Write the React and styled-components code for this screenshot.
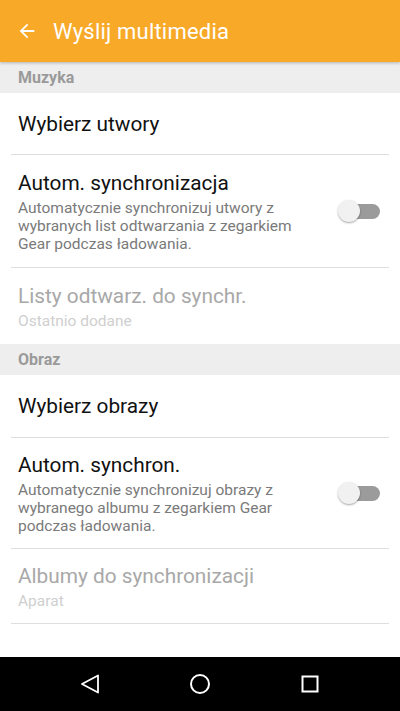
import React from "react";
import styled, { createGlobalStyle } from "styled-components";

const Global = createGlobalStyle`
  html, body { margin: 0; padding: 0; background: #fff; }
  body { font-family: Roboto, "Noto Sans", sans-serif; }
  * { box-sizing: border-box; }
`;

const Screen = styled.div`
  width: 400px;
  height: 711px;
  display: flex;
  flex-direction: column;
  background: #fff;
  overflow: hidden;
`;

const AppBar = styled.header`
  height: 62px;
  flex: none;
  background: #f8a928;
  display: flex;
  align-items: center;
  padding-left: 16px;
  gap: 15px;
  color: #fff;
  position: relative;
  z-index: 1;
  box-shadow: 0 1px 3px rgba(0, 0, 0, 0.25);
`;

const Title = styled.h1`
  margin: 0;
  font-size: 22px;
  font-weight: 400;
  letter-spacing: 0.2px;
`;

const Content = styled.main`
  flex: 1;
  display: flex;
  flex-direction: column;
`;

const SectionHeader = styled.div`
  height: 31px;
  background: #eeeeee;
  display: flex;
  align-items: center;
  padding-left: 18px;
  font-size: 16px;
  font-weight: 700;
  color: #9a9a9a;
`;

const Row = styled.div`
  height: ${(p) => p.h}px;
  margin: 0 11px;
  padding: 0 7px;
  display: flex;
  align-items: center;
  justify-content: space-between;
  border-bottom: ${(p) => (p.last ? "none" : "1px solid #dedede")};
`;

const Texts = styled.div`
  display: flex;
  flex-direction: column;
  max-width: 300px;
`;

const RowTitle = styled.div`
  font-size: 20.8px;
  line-height: 26px;
  color: ${(p) => (p.disabled ? "#a8a8a8" : "#111")};
`;

const RowSub = styled.div`
  font-size: 15.5px;
  line-height: 18px;
  margin-top: 3px;
  color: ${(p) => (p.disabled ? "#cfcfcf" : "#7a7a7a")};
`;

const Toggle = styled.div`
  position: relative;
  width: 42px;
  height: 22px;
  margin-right: 2px;
  flex: none;
  &::before {
    content: "";
    position: absolute;
    left: 4px;
    right: 0;
    top: 4px;
    height: 15px;
    border-radius: 8px;
    background: #9b9b9b;
  }
  &::after {
    content: "";
    position: absolute;
    left: 0;
    top: 0;
    width: 22px;
    height: 22px;
    border-radius: 50%;
    background: #f1f1f1;
    box-shadow: 0 1px 2px rgba(0, 0, 0, 0.35);
  }
`;

const NavBar = styled.nav`
  height: 54px;
  flex: none;
  background: #000;
  display: flex;
  align-items: center;
  justify-content: space-between;
  padding: 0 78px;
`;

const NavBtn = styled.div`
  width: 24px;
  height: 24px;
  display: flex;
  align-items: center;
  justify-content: center;
`;

export default function App() {
  return (
    <Screen>
      <Global />
      <AppBar>
        <svg width="22" height="22" viewBox="0 0 24 24">
          <path d="M20 11H7.83l5.59-5.59L12 4l-8 8 8 8 1.41-1.41L7.83 13H20v-2z" fill="#fff" />
        </svg>
        <Title>Wyślij multimedia</Title>
      </AppBar>
      <Content>
        <SectionHeader>Muzyka</SectionHeader>
        <Row h={62}>
          <RowTitle>Wybierz utwory</RowTitle>
        </Row>
        <Row h={113}>
          <Texts>
            <RowTitle>Autom. synchronizacja</RowTitle>
            <RowSub>
              Automatycznie synchronizuj utwory z wybranych list odtwarzania z zegarkiem Gear podczas ładowania.
            </RowSub>
          </Texts>
          <Toggle />
        </Row>
        <Row h={76} last>
          <Texts>
            <RowTitle disabled>Listy odtwarz. do synchr.</RowTitle>
            <RowSub disabled>Ostatnio dodane</RowSub>
          </Texts>
        </Row>
        <SectionHeader>Obraz</SectionHeader>
        <Row h={63}>
          <RowTitle>Wybierz obrazy</RowTitle>
        </Row>
        <Row h={111}>
          <Texts>
            <RowTitle>Autom. synchron.</RowTitle>
            <RowSub>
              Automatycznie synchronizuj obrazy z wybranego albumu z zegarkiem Gear podczas ładowania.
            </RowSub>
          </Texts>
          <Toggle />
        </Row>
        <Row h={75}>
          <Texts>
            <RowTitle disabled>Albumy do synchronizacji</RowTitle>
            <RowSub disabled>Aparat</RowSub>
          </Texts>
        </Row>
      </Content>
      <NavBar>
        <NavBtn>
          <svg width="20" height="20" viewBox="0 0 20 20">
            <path d="M18 1.5 L2 10 L18 18.5 Z" fill="none" stroke="#fff" strokeWidth="1.8" strokeLinejoin="round" />
          </svg>
        </NavBtn>
        <NavBtn>
          <svg width="22" height="22" viewBox="0 0 22 22">
            <circle cx="11" cy="11" r="9" fill="none" stroke="#fff" strokeWidth="2" />
          </svg>
        </NavBtn>
        <NavBtn>
          <svg width="20" height="20" viewBox="0 0 20 20">
            <rect x="2.5" y="2.5" width="15" height="15" fill="none" stroke="#fff" strokeWidth="2" />
          </svg>
        </NavBtn>
      </NavBar>
    </Screen>
  );
}
